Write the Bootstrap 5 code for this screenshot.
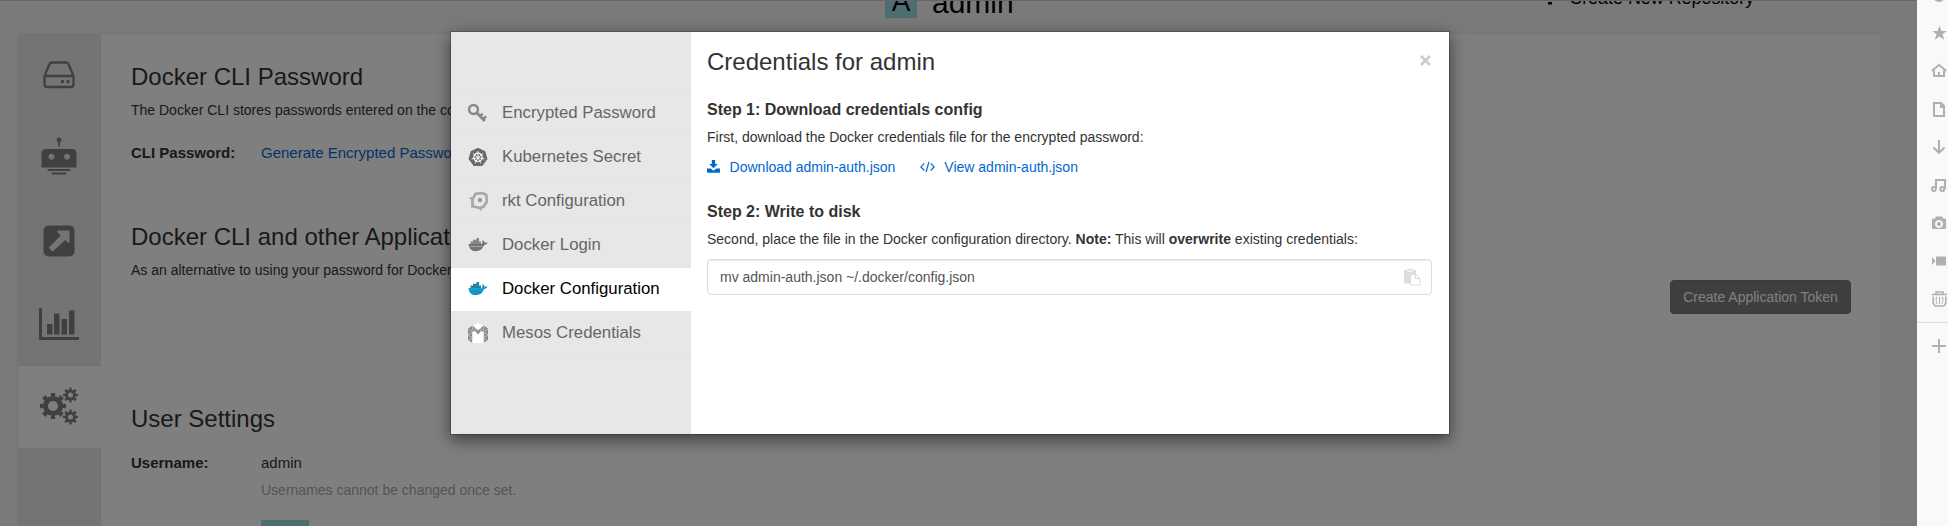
<!DOCTYPE html>
<html lang="en">
<head>
<meta charset="utf-8">
<title>admin · Credentials</title>
<link href="https://cdn.jsdelivr.net/npm/bootstrap@5.3.0/dist/css/bootstrap.min.css" rel="stylesheet">
<style>
body{font-family:"Liberation Sans",Arial,sans-serif;font-size:14px;line-height:20px;color:#333;background:#f4f4f4;height:526px;overflow:hidden}
a{color:#0068cf;text-decoration:none}
.main-area{width:1917px;height:526px;flex:none}
.top-strip{height:32px;padding-top:1px;overflow:hidden;border-top:1px solid #cbcbd4;color:#000}
.avatar-a{width:32px;height:32px;background:#99dbe5;font-size:28px;line-height:32px;text-align:center;margin-top:-16px}
.org-name{font-size:30px;line-height:34px;margin-top:-16px;margin-left:15px}
.new-repo{font-size:17.9px;line-height:20px;margin-top:-14px}
.panel-box{margin:1px 35px 0 17px;height:500px;border:1px solid #e8e8e8;background:#fff}
.side-tabs{width:83px;background:#e8e8e8;border-right:1px solid #dde7ed}
.side-tab{height:83px;border-bottom:1px solid #dfe6ea;color:#808080}
.side-tab.on{background:#fff;margin-right:-1px;padding-right:2px;padding-bottom:2px;border-color:#dde7ed}
h3,.h24{font-size:24px;line-height:28px;font-weight:400;margin:0}
.pane{padding:29px 30px 0 30px}
.f15{font-size:15px}
.lbl{width:130px;font-weight:700}
.token-btn{height:34px;width:181px;background:#7e7e7e;border:1px solid #757575;border-radius:4px;color:#fff;font-size:14px;line-height:20px;padding:6px 0}
.dim{background:rgba(0,0,0,.5);inset:0}
.cred-box{left:450px;top:31px;width:1000px;height:404px;background:#fff;border:1px solid rgba(0,0,0,.2);background-clip:padding-box;box-shadow:0 5px 15px rgba(0,0,0,.5)}
.cred-tabs{width:240px;background:#e7e7e7;border-right:1px solid #dde7f0;padding-top:59px}
.cred-tab{height:44px;border-bottom:1px solid #dde7f0;font-size:16.8px;color:#666;padding-left:17px;padding-bottom:1px;line-height:20px}
.cred-tab:first-child{height:45px;border-top:1px solid #dde7f0;padding-bottom:2px}
.cred-tab svg{width:20px;height:20px;margin-right:14px;flex:none}
.cred-tab.on{background:#fff;color:#000;margin-right:-1px}
.cred-main{padding:16px 17px 0 16px}
.cred-main h4{font-size:16px;line-height:20px;font-weight:700;margin:0}
.copy-box{height:36px;border:1px solid #ddd;border-radius:4px;color:#555;padding:0 10px 0 12px;margin-top:10px;box-shadow:inset 0 1px 1px rgba(0,0,0,.075)}
.tool-rail{background:#f9f9f7;color:#adb1b3;width:31px}
.tool-rail svg{width:16px;height:16px;margin-left:14px}
.cell{height:38px}
</style>
</head>
<body class="d-flex position-relative">
<div class="main-area position-relative">
  <div class="top-strip d-flex align-items-start">
    <div class="avatar-a" style="margin-left:885px">A</div>
    <div class="org-name">admin</div>
    <svg width="6" height="4" style="margin-left:533px"><path d="M1 0h4v2.500H1z"/></svg>
    <div class="new-repo" style="margin-left:16.500px">Create New Repository</div>
  </div>
  <div class="panel-box d-flex">
    <div class="side-tabs flex-shrink-0">
      <div class="side-tab d-flex align-items-center justify-content-center"><svg width="32" height="28" viewBox="0 0 32 28" fill="none" stroke="currentColor" stroke-width="2.300"><path d="M1.500 15 6.300 3.400Q7.100 1.500 9 1.500h14q1.900 0 2.700 1.900L30.500 15v8.500q0 2.500-2.500 2.500H4q-2.500 0-2.500-2.500zM1.500 15h29"/><circle cx="19.500" cy="20.500" r="1.700" fill="currentColor" stroke="none"/><circle cx="25" cy="20.500" r="1.700" fill="currentColor" stroke="none"/></svg></div>
      <div class="side-tab d-flex align-items-center justify-content-center pb-1"><svg width="36" height="38" viewBox="0 0 36 38"><path fill="currentColor" fill-rule="evenodd" d="M17.200 9.500V5a2.400 2.400 0 1 1 1.800 0v4.500zM5 12h26q4 0 4.500 4v14.500H.5V16q.5-4 4.500-4zm5.500 4.800a3 3 0 1 0 .01 0zm15.500 0a3 3 0 1 0 .01 0z"/><path stroke="currentColor" stroke-width="2.200" stroke-linecap="round" d="M7.500 33h21M11.500 36.500h13"/></svg></div>
      <div class="side-tab d-flex align-items-center justify-content-center"><svg width="32" height="32" viewBox="0 0 32 32"><rect x=".5" y=".5" width="31" height="31" rx="5" fill="currentColor"/><path fill="#e8e8e8" d="M15 5.500h10.500q1 0 1 1V17q-.5 1.500-1.700.6L22.300 15 10.500 25.800q-1 .8-1.900 0L6.500 23.600q-.8-.9 0-1.800L17.800 10.500 14.500 7.200q-.8-1.200.5-1.700z"/></svg></div>
      <div class="side-tab d-flex align-items-center justify-content-center"><svg width="42" height="34" viewBox="0 0 42 34"><path fill="currentColor" d="M1 1h3v29h37v3H1zM9 17h5.500v10.500H9zM16 6.500h5.500v21H16zM23.500 12H29v15.500h-5.500zM31 3.500h5.500v24H31z"/></svg></div>
      <div class="side-tab on d-flex align-items-center justify-content-center"><svg width="40" height="38" viewBox="0 0 40 38" fill="none" stroke="currentColor"><g><circle cx="14" cy="19" r="7.600" stroke-width="5"/><circle cx="14" cy="19" r="11.300" stroke-width="3.600" pathLength="16" stroke-dasharray="1 1" stroke-dashoffset=".5"/></g><g><circle cx="31.500" cy="8" r="4" stroke-width="3"/><circle cx="31.500" cy="8" r="6.200" stroke-width="2.600" pathLength="16" stroke-dasharray="1 1" stroke-dashoffset=".5"/></g><g><circle cx="31.500" cy="30" r="4" stroke-width="3"/><circle cx="31.500" cy="30" r="6.200" stroke-width="2.600" pathLength="16" stroke-dasharray="1 1" stroke-dashoffset=".5"/></g></svg></div>
    </div>
    <div class="pane flex-grow-1">
      <h3>Docker CLI Password</h3>
      <p style="margin:9px 0 23px">The Docker CLI stores passwords entered on the command line in plaintext.</p>
      <div class="d-flex f15"><div class="lbl">CLI Password:</div><a href="#">Generate Encrypted Password</a></div>
      <h3 style="margin-top:60px">Docker CLI and other Application Tokens</h3>
      <p style="margin:9px 0 0">As an alternative to using your password for Docker and other CLIs, you can create tokens.</p>
      <div class="d-flex justify-content-end"><button class="token-btn">Create Application Token</button></div>
      <h3 style="margin-top:91px">User Settings</h3>
      <div class="d-flex f15" style="margin-top:20px"><div class="lbl">Username:</div><div>admin</div></div>
      <div style="margin:7px 0 0 130px;color:#aaa">Usernames cannot be changed once set.</div>
      <div style="margin:20px 0 0 130px;width:48px;height:20px;background:#99dbe5"></div>
    </div>
  </div>
  <div class="dim position-absolute"></div>
  <div class="cred-box position-absolute d-flex">
    <div class="cred-tabs flex-shrink-0">
      <div class="cred-tab d-flex align-items-center"><svg viewBox="0 0 20 20" fill="none" stroke="#888" stroke-width="2.500"><circle cx="5.500" cy="6.500" r="4.400"/><path stroke-width="2.800" d="m8.500 9.500 8.300 8.500"/><path d="m12.100 13.200 2.600-2.600M15.100 16l3-2.600"/></svg>Encrypted Password</div>
      <div class="cred-tab d-flex align-items-center"><svg viewBox="0 0 20 20"><path fill="#6b6b6b" d="m10 .8 7.300 3.400 2.200 7.800-5.200 7H5.700l-5.200-7 2.200-7.800z"/><g fill="none" stroke="#fff"><circle cx="10" cy="10.300" r="4.200" stroke-width="1.200"/><path stroke-width=".9" d="M10 4v6.500M15 6.500l-5 4M16.300 12l-6.300-1.500M12.800 16.300 10 10.500M7.200 16.300l2.800-5.800M3.700 12l6.300-1.500M5 6.500l5 4"/></g></svg>Kubernetes Secret</div>
      <div class="cred-tab d-flex align-items-center"><svg viewBox="0 0 20 20" fill="none" stroke="#a8a8a8" stroke-width="2.700" stroke-linejoin="round"><path d="M7.500 2.800 14 2l4.300 1.800.5 7-3.500 5.200-4.500.8-6-1.500L4.300 9z"/><path stroke-width="1.800" d="M5 7.500 1.500 7M5 14l-1.500 2.500M12.500 16.500l.5 3"/><circle cx="12" cy="9" r="2.200" fill="#999" stroke="none"/></svg>rkt Configuration</div>
      <div class="cred-tab d-flex align-items-center"><svg viewBox="0 0 20 20"><path fill="#888" d="M2.500 9V6.500H5V4.800h3.500V3H11v3.500h2V9z"/><path fill="#737373" d="M.5 9h13.300q1.200-1.500.7-4 2 .8 2 2.800 1.500-.7 3.200 0-1 2-3.500 2.200-2.500 6.200-8.700 6.200Q1 16.200.5 9z"/><path stroke="#a5a5a5" d="M1 11.500h14"/></svg>Docker Login</div>
      <div class="cred-tab on d-flex align-items-center"><svg viewBox="0 0 20 20"><path fill="#2b829d" d="M2.500 9V6.500H5V4.800h3.500V3H11v3.500h2V9z"/><path fill="#1495c4" d="M.5 9h13.300q1.200-1.500.7-4 2 .8 2 2.800 1.500-.7 3.200 0-1 2-3.500 2.200-2.500 6.200-8.700 6.200Q1 16.200.5 9z"/><path stroke="#1eb2dd" d="M1 10h14"/></svg>Docker Configuration</div>
      <div class="cred-tab d-flex align-items-center"><svg viewBox="0 0 20 20"><path fill="#fff" d="m5 2.500 5-2.500 5 2.500v17.500H5z"/><path fill="#8c8c8c" d="M0 5.500 4.500 2.500l5.500 5 5.500-5L20 5.500V17l-4 2.500V9l-3-1-3 3.500L7 8 4 9v10.500L0 17z"/><path fill="none" stroke="#ddd" stroke-width=".6" d="m0 6 5 3-5 3 5 3-5 3M20 6l-5 3 5 3-5 3 5 3M4.500 3v4M15.500 3v4M7 5v4M13 5v4"/></svg>Mesos Credentials</div>
    </div>
    <div class="cred-main flex-grow-1">
      <div class="d-flex justify-content-between"><div class="h24">Credentials for admin</div><svg width="11" height="11" viewBox="0 0 11 11" style="margin:7px 1px 0 0"><path stroke="#ccc" stroke-width="2.700" d="m1 1 9 9M10 1l-9 9"/></svg></div>
      <h4 style="margin-top:24px">Step 1: Download credentials config</h4>
      <p style="margin:7px 0 10px">First, download the Docker credentials file for the encrypted password:</p>
      <div class="d-flex">
        <a href="#" class="d-flex"><svg width="13" height="13" viewBox="0 0 13 13" style="margin:3px 9.600px 0 0"><path fill="currentColor" d="M4.800 0h3.400v4h2.600L6.500 8.300 2.200 4h2.600zM0 8.500h3.800l2.700 2.200 2.700-2.200H13V12q0 .8-.8.8H.8Q0 12.800 0 12z"/></svg>Download admin-auth.json</a>
        <a href="#" class="d-flex" style="margin-left:24.400px"><svg width="15" height="12" viewBox="0 0 15 12" fill="none" stroke="currentColor" stroke-width="1.200" style="margin:4px 9.600px 0 0"><path d="M4.300 2.300.9 5.900l3.400 3.600M10.700 2.300l3.400 3.600-3.400 3.600M8.900.8 6.100 11"/></svg>View admin-auth.json</a>
      </div>
      <h4 style="margin-top:25px">Step 2: Write to disk</h4>
      <p style="margin:7px 0 0">Second, place the file in the Docker configuration directory. <b>Note:</b> This will <b>overwrite</b> existing credentials:</p>
      <div class="copy-box d-flex align-items-center justify-content-between"><span>mv admin-auth.json ~/.docker/config.json</span><svg width="17" height="17" viewBox="0 0 17 17"><path fill="#ddd" d="M0 1h3V0h6v1h3v4H6v9.500H0z"/><path fill="#fff" d="M3 1.500h6v1H3z"/><path fill="#fff" stroke="#ddd" d="M6.500 5.500h5l4.500 4v6.500H6.500zM11.500 5.500v4H16"/></svg></div>
    </div>
  </div>
</div>
<div class="tool-rail flex-shrink-0 h-100 overflow-hidden">
  <div style="height:14px" class="d-flex align-items-start"><svg viewBox="0 0 16 16"><circle cx="8" cy="-4.500" r="6.500" fill="currentColor"/></svg></div>
  <div class="cell d-flex align-items-center"><svg viewBox="0 0 16 16"><path fill="currentColor" d="m8.500.8 1.900 5.100h5.300l-4.200 3.300 1.700 5.500-4.700-3.300-4.700 3.300 1.700-5.500L1.300 5.900h5.300z"/></svg></div>
  <div class="cell d-flex align-items-center"><svg viewBox="0 0 16 16" fill="none" stroke="currentColor" stroke-width="2"><path d="m.7 8 7.300-6 7.300 6M3 7.500V13h10V7.500"/><path d="M8 9v4"/></svg></div>
  <div class="cell d-flex align-items-center"><svg viewBox="0 0 16 16"><path fill="none" stroke="currentColor" stroke-width="2" d="M3 2h7l3 3v10H3z"/><path fill="currentColor" d="M9 2v5h5z"/></svg></div>
  <div class="cell d-flex align-items-center"><svg viewBox="0 0 16 16" fill="none" stroke="currentColor" stroke-width="2"><path d="M8 1v12.500M2.500 8.500 8 13.800l5.500-5.300"/></svg></div>
  <div class="cell d-flex align-items-center"><svg viewBox="0 0 16 16" fill="none" stroke="currentColor" stroke-width="2"><circle cx="2.800" cy="12" r="2"/><circle cx="11.300" cy="12" r="2"/><path d="M5 12V3h9v9"/></svg></div>
  <div class="cell d-flex align-items-center"><svg viewBox="0 0 16 16"><path fill="currentColor" fill-rule="evenodd" d="M5 1.500h6l1 2h2q1 0 1 1V13q0 1-1 1H2q-1 0-1-1V4.500q0-1 1-1h2zM8 5a4 4 0 1 0 .01 0z"/><circle cx="8" cy="9" r="2" fill="currentColor"/></svg></div>
  <div class="cell d-flex align-items-center"><svg viewBox="0 0 16 16"><path fill="currentColor" d="M6 3.500h8q1 0 1 1v7q0 1-1 1H6q-1 0-1-1v-7q0-1 1-1zM1 4l3.500 4L1 12z"/></svg></div>
  <div class="cell d-flex align-items-center"><svg viewBox="0 0 16 16" fill="none" stroke="currentColor" stroke-width="1.600"><path d="M1 3.500h15M5 3V1h7v2M2.200 5.500v6.700l2 2.800h8.600l2-2.800V5.500"/><path stroke-width="1.100" d="M5.500 6q-1 3.500.3 6.800M8.500 6v7M11.500 6q1 3.500-.3 6.800"/></svg></div>
  <div style="margin-top:4px;border-top:1px solid #ddd;padding-top:15px"><svg viewBox="0 0 16 16" class="d-block"><path stroke="currentColor" stroke-width="2" d="M8 1v14M1 8h14"/></svg></div>
</div>
<script src="https://cdn.jsdelivr.net/npm/bootstrap@5.3.0/dist/js/bootstrap.bundle.min.js"></script>
</body>
</html>
